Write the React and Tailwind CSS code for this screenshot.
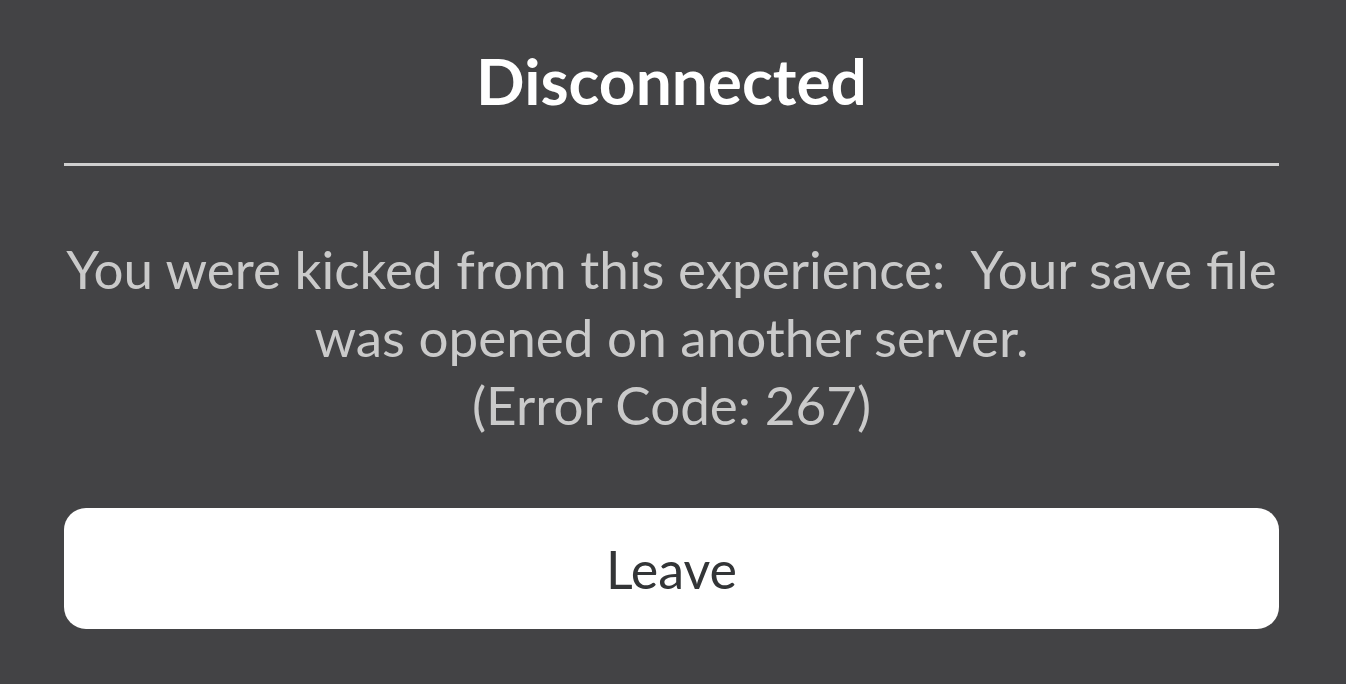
import React from 'react';

const App = () => {
    return (
        <div className="w-[1346px] h-[684px] bg-[#434345] overflow-hidden" style={{ fontFamily: 'Lato, "Open Sans", sans-serif' }}>
            <div className="ml-[64px] w-[1215px] flex flex-col">
                <div className="h-[163px] flex items-center justify-center pb-[2px]">
                    <h1 className="text-white font-bold text-[64px] leading-none">Disconnected</h1>
                </div>
                <div className="h-[3px] bg-[#cfcfcf]" />
                <div className="pt-[69px] text-center text-[#cacaca] text-[53px] leading-[68px]">
                    <p>You were kicked from this experience:&nbsp; Your save file</p>
                    <p>was opened on another server.</p>
                    <p>(Error Code: 267)</p>
                </div>
                <button className="mt-[69px] h-[121px] w-full bg-white rounded-[22px] text-[#333537] text-[52px] flex items-center justify-center">
                    Leave
                </button>
            </div>
        </div>
    );
};

export default App;
